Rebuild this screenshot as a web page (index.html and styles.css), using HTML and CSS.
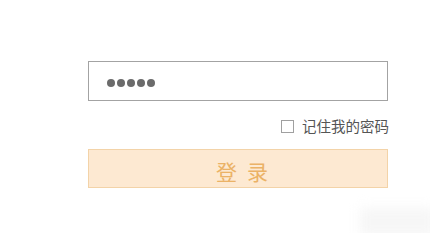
FILE: index.html
```html
<!DOCTYPE html>
<html lang="zh-CN">
<head>
<meta charset="utf-8">
<title>登录</title>
<link rel="stylesheet" href="styles.css">
</head>
<body>
<div class="login">
  <div class="field">
    <span class="dot"></span><span class="dot"></span><span class="dot"></span><span class="dot"></span><span class="dot"></span>
  </div>
  <label class="remember">
    <span class="check"></span>
    <span class="remember-text">记住我的密码</span>
  </label>
  <div class="btn">登录</div>
</div>
<div class="smudge"></div>
</body>
</html>
```

FILE: styles.css
```css
html, body {
  margin: 0;
  padding: 0;
  background: #ffffff;
}
body {
  width: 430px;
  height: 233px;
  overflow: hidden;
  position: relative;
  font-family: "Noto Sans CJK SC", "Noto Sans", sans-serif;
}
.login {
  width: 300px;
  padding-top: 61px;
  padding-left: 88px;
  display: flex;
  flex-direction: column;
}
.field {
  box-sizing: border-box;
  height: 40px;
  border: 1px solid #a3a3a3;
  display: flex;
  align-items: center;
  gap: 2px;
  padding-left: 18px;
  padding-top: 3px;
}
.dot {
  width: 8px;
  height: 8px;
  border-radius: 50%;
  background: #6b6b6b;
}
.remember {
  margin-top: 18px;
  align-self: flex-end;
  display: flex;
  align-items: center;
  gap: 8px;
  height: 14px;
  margin-right: -1px;
}
.check {
  box-sizing: border-box;
  width: 13px;
  height: 13px;
  border: 1px solid #a0a0a0;
  background: #fff;
}
.remember-text {
  font-size: 14.5px;
  line-height: 14px;
  color: #555555;
}
.btn {
  box-sizing: border-box;
  margin-top: 16px;
  height: 39px;
  background: #fde9d2;
  border: 1px solid #f3d3a8;
  color: #ebb266;
  font-size: 21px;
  font-weight: 400;
  line-height: 37px;
  text-align: center;
  letter-spacing: 10px;
  text-indent: 18px;
  padding-top: 3px;
}
.smudge {
  position: absolute;
  left: 360px;
  top: 208px;
  width: 75px;
  height: 28px;
  background: #f6f6f6;
  filter: blur(6px);
}
```
